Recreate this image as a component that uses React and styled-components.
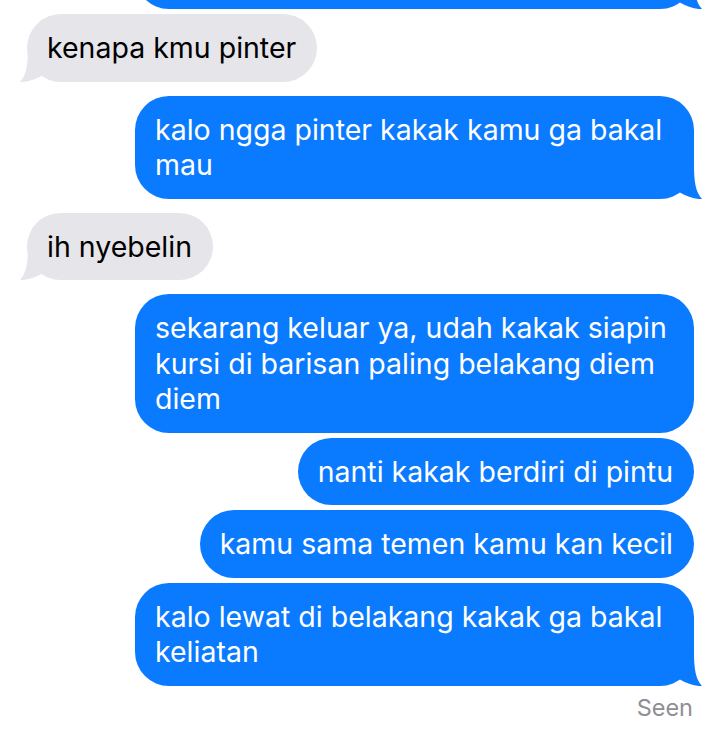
import React from "react";
import styled, { createGlobalStyle } from "styled-components";

const GlobalStyle = createGlobalStyle`
  html, body {
    margin: 0;
    padding: 0;
    background: #ffffff;
  }
  body {
    font-family: Inter, "Noto Sans", "Liberation Sans", sans-serif;
    -webkit-font-smoothing: antialiased;
    overflow: hidden;
  }
`;

const Thread = styled.div`
  display: flex;
  flex-direction: column;
  padding: 0 26px 0 27px;
  width: 720px;
  height: 747px;
  box-sizing: border-box;
  overflow: hidden;
`;

const Row = styled.div`
  display: flex;
  justify-content: ${(p) => (p.$from === "me" ? "flex-end" : "flex-start")};
  margin-top: ${(p) => (p.$gap === "tight" ? "5px" : p.$gap === "none" ? "0" : "14px")};
`;

const Bubble = styled.div`
  position: relative;
  box-sizing: border-box;
  max-width: 559px;
  padding: 16px 21px 16px 20px;
  border-radius: 34px;
  background: ${(p) => (p.$from === "me" ? "#0a7aff" : "#e5e5ea")};
  color: ${(p) => (p.$from === "me" ? "#ffffff" : "#000000")};
  font-size: 28.5px;
  line-height: 35.5px;
  letter-spacing: 0;
`;

const BubbleText = styled.span`
  position: relative;
  z-index: 1;
`;

const CutBubble = styled(Bubble)`
  width: 559px;
  height: 68px;
  margin-top: -59px;
`;

const TailSvg = styled.svg`
  position: absolute;
  bottom: 0;
  width: 42px;
  height: 34px;
  z-index: 0;
  ${(p) =>
    p.$from === "me"
      ? "right: -8px;"
      : "left: -7px; transform: scaleX(-1);"}
`;

const SeenRow = styled.div`
  display: flex;
  justify-content: flex-end;
  margin-top: 9px;
  font-size: 23.5px;
  line-height: 26px;
  color: #8e8e93;
  padding-right: 1px;
`;

function Tail({ from }) {
  return (
    <TailSvg $from={from} viewBox="0 0 42 34" aria-hidden="true">
      <path
        d="M0 0 H34 C34 16 35.5 27 42 34 C35 34.5 27 31.5 19 27 Z"
        fill={from === "me" ? "#0a7aff" : "#e5e5ea"}
      />
    </TailSvg>
  );
}

const messages = [
  { from: "them", gap: "tight", tail: true, text: "kenapa kmu pinter" },
  { from: "me", gap: "loose", tail: true, text: "kalo ngga pinter kakak kamu ga bakal mau" },
  { from: "them", gap: "loose", tail: true, text: "ih nyebelin" },
  {
    from: "me",
    gap: "loose",
    tail: false,
    text: "sekarang keluar ya, udah kakak siapin kursi di barisan paling belakang diem diem",
  },
  { from: "me", gap: "tight", tail: false, text: "nanti kakak berdiri di pintu" },
  { from: "me", gap: "tight", tail: false, text: "kamu sama temen kamu kan kecil" },
  { from: "me", gap: "tight", tail: true, text: "kalo lewat di belakang kakak ga bakal keliatan" },
];

export default function App() {
  return (
    <>
      <GlobalStyle />
      <Thread>
        <Row $from="me" $gap="none">
          <CutBubble $from="me">
            <Tail from="me" />
          </CutBubble>
        </Row>
        {messages.map((m, i) => (
          <Row key={i} $from={m.from} $gap={m.gap}>
            <Bubble $from={m.from}>
              {m.tail && <Tail from={m.from} />}
              <BubbleText>{m.text}</BubbleText>
            </Bubble>
          </Row>
        ))}
        <SeenRow>Seen</SeenRow>
      </Thread>
    </>
  );
}
